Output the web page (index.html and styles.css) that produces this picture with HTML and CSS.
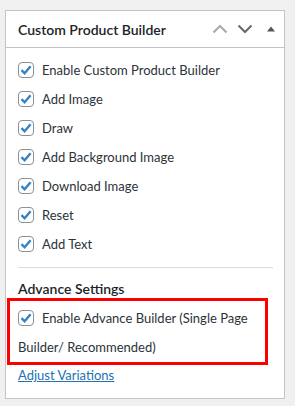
FILE: index.html
```html
<!DOCTYPE html>
<html>
<head>
<meta charset="utf-8">
<link rel="stylesheet" href="styles.css">
</head>
<body>
<div class="postbox">
  <div class="postbox-header">
    <h2 class="title">Custom Product Builder</h2>
    <div class="handle-actions">
      <svg class="arrow up" width="16" height="16" viewBox="0 0 16 16"><path d="M1.5 11.5 L8 5 L14.5 11.5" fill="none" stroke="currentColor" stroke-width="2"/></svg>
      <svg class="arrow down" width="16" height="16" viewBox="0 0 16 16"><path d="M1.5 4.5 L8 11 L14.5 4.5" fill="none" stroke="currentColor" stroke-width="2"/></svg>
      <svg class="arrow toggle" width="10" height="10" viewBox="0 0 10 10"><path d="M1 7.5 L5 2.5 L9 7.5 Z" fill="currentColor"/></svg>
    </div>
  </div>
  <div class="inside">
    <ul class="options">
      <li><span class="cb"><svg viewBox="0 0 16 16" width="16" height="16"><path d="M3.5 8.2 L6.6 11.3 L12.6 4.3" fill="none" stroke="#3582c4" stroke-width="2.4"/></svg></span>Enable Custom Product Builder</li>
      <li><span class="cb"><svg viewBox="0 0 16 16" width="16" height="16"><path d="M3.5 8.2 L6.6 11.3 L12.6 4.3" fill="none" stroke="#3582c4" stroke-width="2.4"/></svg></span>Add Image</li>
      <li><span class="cb"><svg viewBox="0 0 16 16" width="16" height="16"><path d="M3.5 8.2 L6.6 11.3 L12.6 4.3" fill="none" stroke="#3582c4" stroke-width="2.4"/></svg></span>Draw</li>
      <li><span class="cb"><svg viewBox="0 0 16 16" width="16" height="16"><path d="M3.5 8.2 L6.6 11.3 L12.6 4.3" fill="none" stroke="#3582c4" stroke-width="2.4"/></svg></span>Add Background Image</li>
      <li><span class="cb"><svg viewBox="0 0 16 16" width="16" height="16"><path d="M3.5 8.2 L6.6 11.3 L12.6 4.3" fill="none" stroke="#3582c4" stroke-width="2.4"/></svg></span>Download Image</li>
      <li><span class="cb"><svg viewBox="0 0 16 16" width="16" height="16"><path d="M3.5 8.2 L6.6 11.3 L12.6 4.3" fill="none" stroke="#3582c4" stroke-width="2.4"/></svg></span>Reset</li>
      <li><span class="cb"><svg viewBox="0 0 16 16" width="16" height="16"><path d="M3.5 8.2 L6.6 11.3 L12.6 4.3" fill="none" stroke="#3582c4" stroke-width="2.4"/></svg></span>Add Text</li>
    </ul>
    <hr class="sep">
    <h3 class="subhead">Advance Settings</h3>
    <div class="highlight">
      <p class="adv"><span class="cb"><svg viewBox="0 0 16 16" width="16" height="16"><path d="M3.5 8.2 L6.6 11.3 L12.6 4.3" fill="none" stroke="#3582c4" stroke-width="2.4"/></svg></span>Enable Advance Builder (Single Page Builder/ Recommended)</p>
    </div>
    <a class="link" href="#">Adjust Variations</a>
  </div>
</div>
</body>
</html>
```

FILE: styles.css
```css
* { box-sizing: border-box; }
body {
  margin: 0;
  background: #f0f0f1;
  padding: 10px 0 0 5px;
  font-family: Lato, "Open Sans", sans-serif;
  color: #1d2327;
}
.postbox {
  width: 280px;
  height: 389px;
  background: #fff;
  border: 1px solid #c3c4c7;
}
.postbox-header {
  height: 37px;
  border-bottom: 1px solid #c3c4c7;
  display: flex;
  align-items: center;
  padding: 0 8px 0 12px;
}
.title {
  margin: 0;
  font-size: 14px;
  font-weight: 600;
  flex: 1;
}
.handle-actions {
  display: flex;
  align-items: center;
  gap: 9px;
}
.arrow.up { color: #a7aaad; }
.arrow.down { color: #646970; }
.arrow.toggle { color: #50575e; margin-left: 4px; }
.inside {
  padding: 8px 12px 0 12px;
}
.options {
  list-style: none;
  margin: 0;
  padding: 0;
}
.options li, .adv {
  font-size: 13px;
  line-height: 29px;
  display: block;
  color: #2c3338;
}
.cb {
  display: inline-block;
  width: 16px;
  height: 16px;
  border: 1px solid #8c8f94;
  border-radius: 4px;
  vertical-align: -3px;
  margin-right: 8px;
  position: relative;
}
.cb svg {
  position: absolute;
  left: -1px;
  top: -1px;
}
.sep {
  border: 0;
  border-top: 1px solid #dcdcde;
  margin: 8px 0 0 0;
  width: 255px;
}
.subhead {
  margin: 12px 0 0 0;
  font-size: 14px;
  font-weight: 600;
  line-height: 18px;
}
.highlight {
  border: 3px solid #ff0000;
  margin: 0 4px 0 -11px;
  padding: 3px 0 0 8px;
}
.adv {
  margin: 0;
}
.link {
  display: block;
  font-size: 13px;
  color: #2271b1;
  text-decoration: underline;
  margin-top: 0;
  line-height: 20px;
}
```
